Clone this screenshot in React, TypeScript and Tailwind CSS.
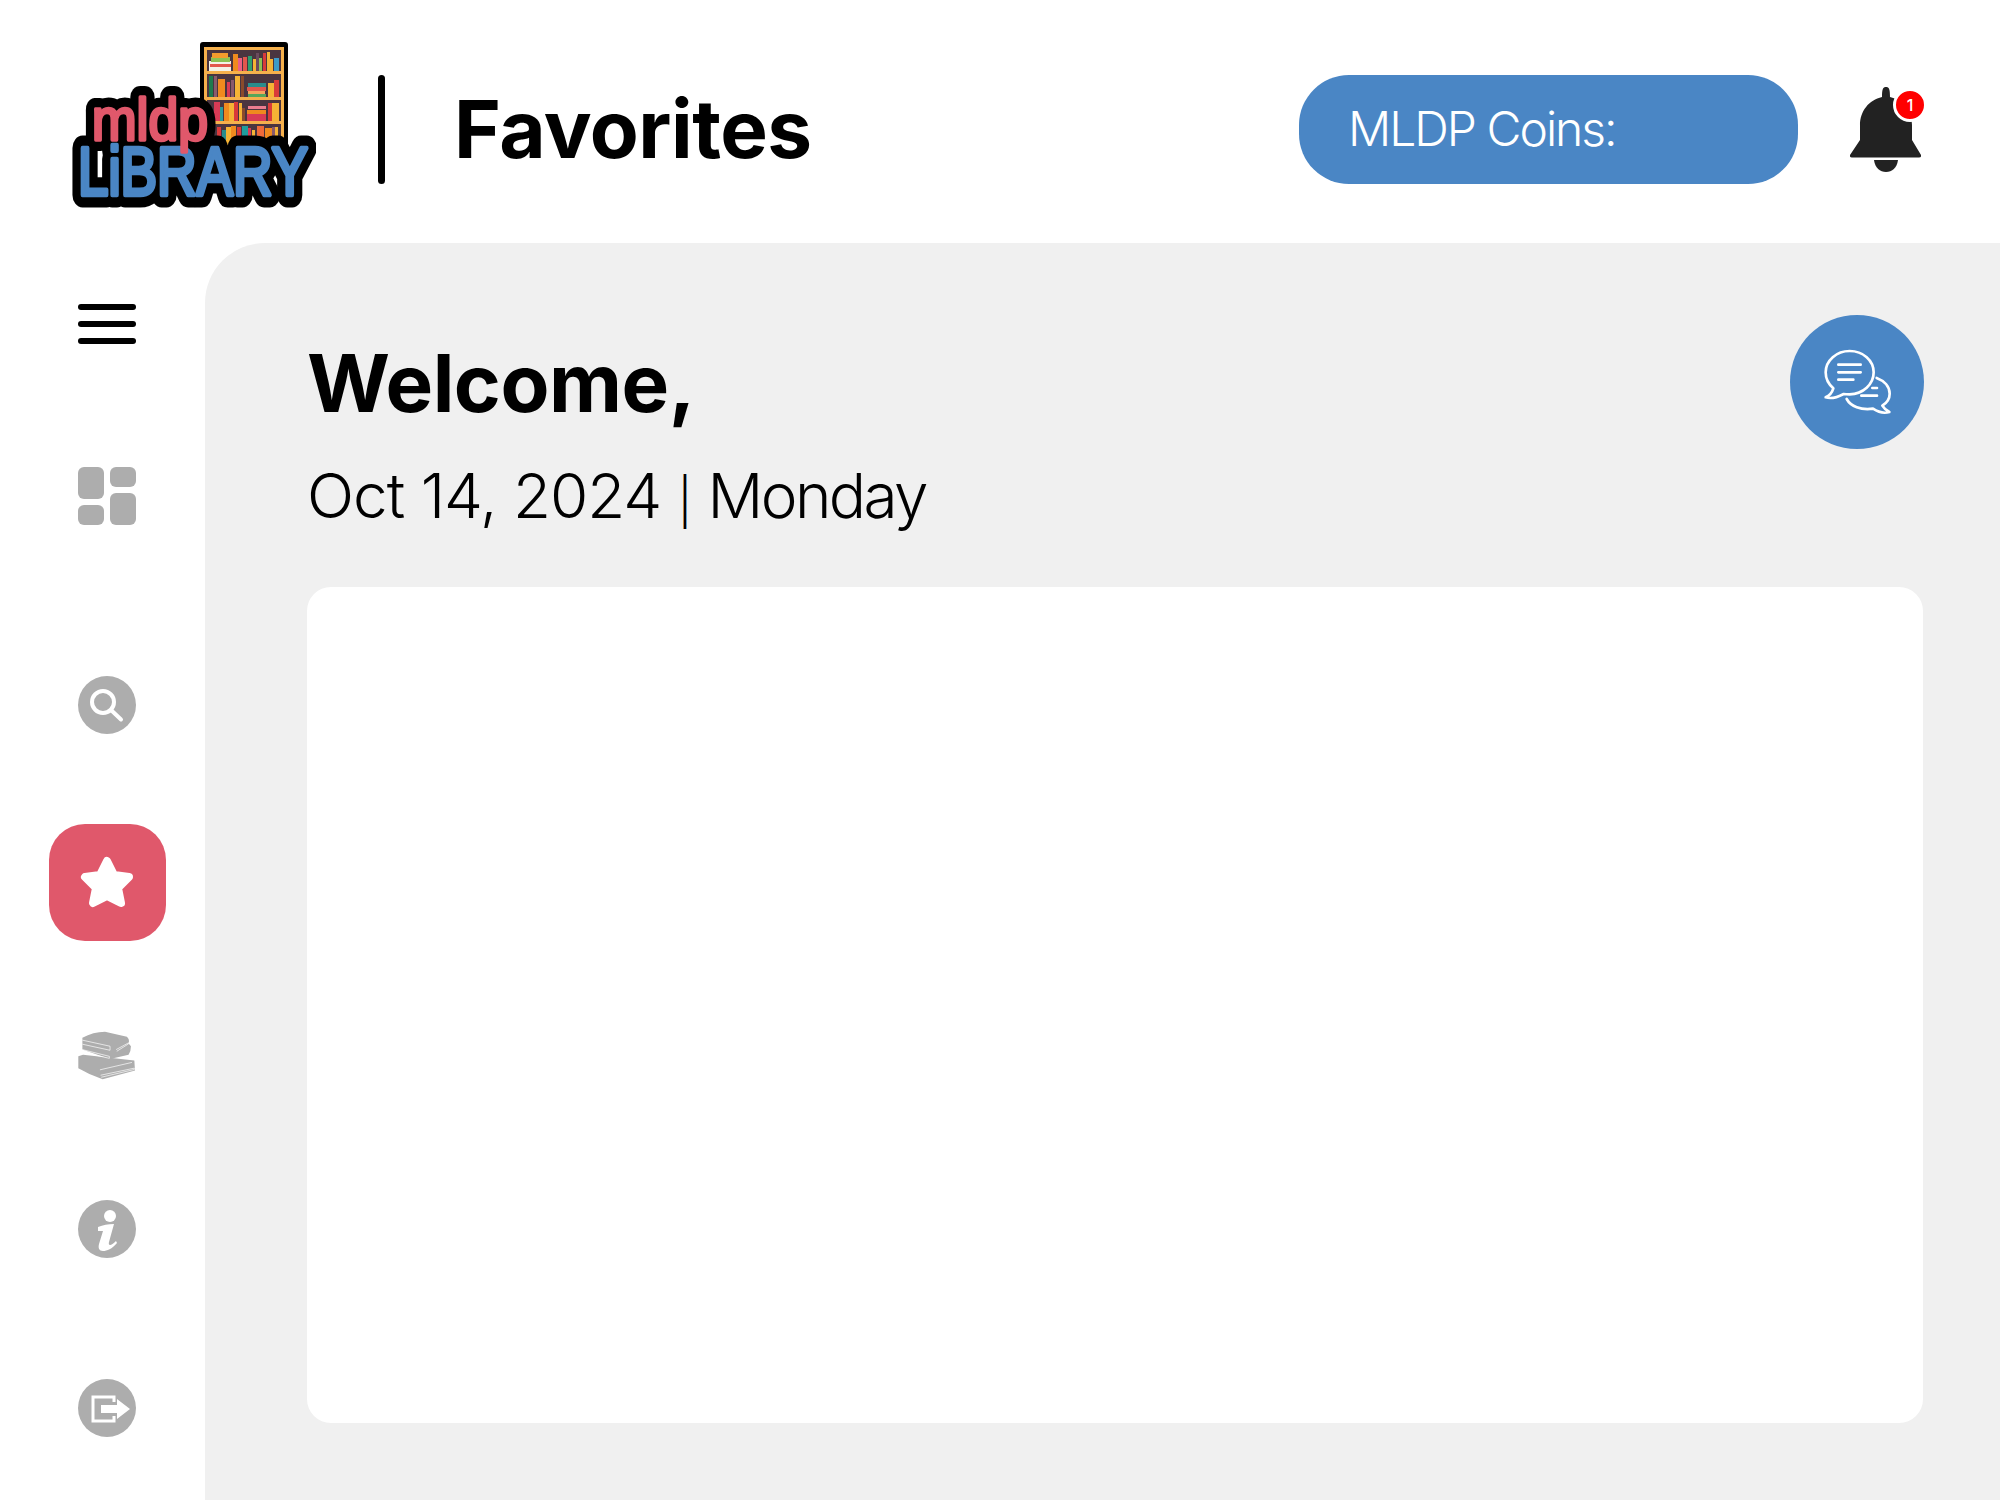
const shelfBooks: [number, number, number, number, string][] = [
  // top shelf
  [209, 61, 22, 10, '#f4f1e6'], [210, 64, 21, 3, '#e2574c'], [211, 57, 19, 5, '#8cc152'], [212, 53, 16, 5, '#f39c2d'],
  [233, 54, 5, 17, '#ef8a1e'], [238, 58, 4, 13, '#ec5f83'], [243, 57, 4, 14, '#e2574c'], [248, 56, 4, 15, '#2f9e6e'],
  [253, 59, 3, 12, '#f5b335'], [256, 53, 3, 18, '#6b4a5c'], [259, 58, 3, 13, '#8cc152'], [263, 53, 3, 18, '#d93a3a'],
  [267, 52, 3, 19, '#f5b335'], [270, 59, 3, 12, '#f5b335'], [274, 58, 5, 13, '#3d9bc9'],
  // second shelf
  [209, 76, 4, 21, '#1f7a4d'], [214, 76, 3, 21, '#8a5a6c'], [218, 79, 7, 18, '#ef8a1e'], [227, 82, 3, 15, '#d93a55'],
  [231, 80, 3, 17, '#8a5a6c'], [235, 76, 5, 21, '#f5b335'], [241, 76, 3, 21, '#8b4a2b'], [248, 83, 18, 4, '#2a8c8c'],
  [247, 87, 19, 4, '#e2574c'], [248, 91, 17, 3, '#f5a35c'], [248, 94, 18, 3, '#55a65a'], [268, 83, 7, 14, '#f5b335'],
  [274, 80, 5, 17, '#d93a3a'],
  // third shelf
  [214, 102, 6, 19, '#d93a55'], [220, 107, 3, 14, '#2a9c9c'], [224, 103, 5, 18, '#ef8a1e'], [229, 103, 5, 18, '#f5b335'],
  [234, 102, 4, 19, '#d93a3a'], [239, 103, 3, 18, '#f5b335'], [242, 108, 3, 13, '#8b4a2b'], [248, 106, 18, 3, '#ec7d8f'],
  [247, 110, 19, 4, '#ef8a1e'], [247, 114, 19, 7, '#d93a55'], [268, 103, 4, 18, '#d93a3a'], [272, 103, 7, 18, '#f5b335'],
  // bottom shelf
  [217, 127, 4, 18, '#d93a3a'], [222, 130, 4, 15, '#2a8c8c'], [226, 127, 5, 18, '#f5b335'], [231, 126, 5, 19, '#ef8a1e'],
  [237, 127, 4, 18, '#d93a3a'], [242, 126, 6, 19, '#1f9c9c'], [248, 128, 3, 17, '#d93a55'], [252, 130, 3, 15, '#f5b335'],
  [257, 126, 7, 19, '#ef6a3a'], [265, 128, 7, 17, '#ef8a1e'], [272, 127, 3, 18, '#8a5a6c'], [275, 127, 3, 18, '#f5b335'],
];

function Logo() {
  return (
    <svg viewBox="70 40 246 172" className="w-[246px] h-[172px] shrink-0 -mt-[7px]">
      <defs>
        <text id="logo-top" x="92" y="140" textLength="116" lengthAdjust="spacingAndGlyphs" fontSize="60" className="font-['Liberation_Sans',sans-serif]">
          mldp
        </text>
        <text id="logo-bottom" x="78" y="195" textLength="230" lengthAdjust="spacingAndGlyphs" fontSize="68" className="font-['Liberation_Sans',sans-serif]">
          LiBRARY
        </text>
      </defs>
      {/* bookcase */}
      <rect x="200" y="42" width="88" height="110" rx="3" fill="#000" />
      <rect x="204" y="47" width="80" height="105" fill="#f5b04c" />
      <rect x="207" y="50" width="74" height="102" fill="#4a3540" />
      <rect x="207" y="71" width="74" height="3" fill="#f5b04c" />
      <rect x="207" y="97" width="74" height="3" fill="#f5b04c" />
      <rect x="207" y="121" width="74" height="3" fill="#f5b04c" />
      {shelfBooks.map(([x, y, w, h, c], i) => (
        <rect key={i} x={x} y={y} width={w} height={h} fill={c} />
      ))}
      {/* wordmark */}
      <use href="#logo-top" fill="#000" stroke="#000" strokeWidth="22" strokeLinejoin="round" />
      <use href="#logo-bottom" fill="#000" stroke="#000" strokeWidth="25" strokeLinejoin="round" />
      <use href="#logo-bottom" fill="#4a86c5" stroke="#4a86c5" strokeWidth="4.500" strokeLinejoin="round" strokeLinecap="round" />
      <use href="#logo-top" fill="#e0586b" stroke="#e0586b" strokeWidth="3.500" strokeLinejoin="round" strokeLinecap="round" />
    </svg>
  );
}

function Bell() {
  return (
    <div className="relative w-[71px] h-[85px]">
      <svg viewBox="0 0 71 85" className="w-[71px] h-[85px]" fill="#222">
        <path d="M32 10 C32 2 33 0 36 0 C39 0 40 2 40 10 C53 13 62 24 62 38 L62 53 L71 68 Q71.500 70.500 69 70.500 L2 70.500 Q-.5 70.500 0 68 L10 53 L10 38 C10 24 19 13 32 10 Z" />
        <path d="M24 73 H48 C47 81 42 85 36 85 C30 85 25 81 24 73 Z" />
      </svg>
      <span className="absolute right-[-6px] top-[1px] w-[34px] h-[34px] rounded-full bg-[#f00] border-[3px] border-white flex items-center justify-center text-white text-[16px] leading-none font-medium">
        1
      </span>
    </div>
  );
}

function GridIcon() {
  return (
    <svg viewBox="0 0 58 58" className="w-[58px] h-[58px]" fill="#adadad">
      <rect x="0" y="0" width="26" height="32" rx="6" />
      <rect x="32" y="0" width="26" height="20" rx="6" />
      <rect x="0" y="38" width="26" height="20" rx="6" />
      <rect x="32" y="26" width="26" height="32" rx="6" />
    </svg>
  );
}

function SearchIcon() {
  return (
    <svg viewBox="0 0 58 58" className="w-[58px] h-[58px]">
      <circle cx="29" cy="29" r="29" fill="#adadad" />
      <circle cx="25" cy="26" r="11" fill="none" stroke="#fff" strokeWidth="4" />
      <path d="M33 34 L43 43.500" stroke="#fff" strokeWidth="4" strokeLinecap="round" />
    </svg>
  );
}

function StarIcon() {
  return (
    <svg viewBox="0 0 58 58" className="w-[58px] h-[58px]">
      <path
        d="M29 7 L36 21 L51 23 L40 34 L43 49 L29 42 L15 49 L18 34 L7 23 L22 21 Z"
        fill="#fff"
        stroke="#fff"
        strokeWidth="8"
        strokeLinejoin="round"
      />
    </svg>
  );
}

function BooksIcon() {
  return (
    <svg viewBox="55 95 172 145" className="w-[58px] h-[49px]" fill="#adadad">
      <path d="M56 170 L70 165 L222 182 L224 212 L128 238 Q90 225 56 205 Z" />
      <path d="M68 115 Q100 97 135 97 L200 112 Q209 120 205 132 L212 140 Q212 155 205 165 L150 178 L68 150 Z" />
      <path d="M68 122 L150 140 L150 152 L68 134 M68 150 L148 170 L148 176 L62 156 M122 226 L222 205 L222 209 L124 232 M168 150 L205 130 L205 133 L170 155 M120 210 L215 188" stroke="#fff" strokeWidth="2" fill="none" />
    </svg>
  );
}

function InfoIcon() {
  return (
    <svg viewBox="0 0 58 58" className="w-[58px] h-[58px]">
      <circle cx="29" cy="29" r="29" fill="#adadad" />
      <circle cx="32" cy="16" r="6" fill="#fff" />
      <path d="M20 27 C25 25 30 24 36 24 L31 42 C30 46 33 46 38 41 L39 43 C34 49 29 51 25 51 C21 51 20 48 21 44 L25 31 L20 31 Z" fill="#fff" />
    </svg>
  );
}

function LogoutIcon() {
  return (
    <svg viewBox="0 0 58 58" className="w-[58px] h-[58px]">
      <circle cx="29" cy="29" r="29" fill="#adadad" />
      <path d="M36 23 V18 H15 V42 H36 V37" fill="none" stroke="#fff" strokeWidth="3" />
      <path d="M23 26 H39 V20 L52 30 L39 40 V34 H23 Z" fill="#fff" />
    </svg>
  );
}

function ChatIcon() {
  return (
    <svg viewBox="58 47 402 400" className="w-[134px] h-[134px]" fill="none" stroke="#fff" strokeWidth="8" strokeLinecap="round" strokeLinejoin="round">
      <circle cx="259" cy="247" r="201" fill="#4a86c5" stroke="none" />
      <path d="M237 154 C198 154 165 182 165 218 C165 238 175 255 188 266 C184 280 176 288 165 293 C180 298 200 293 219 283 C225 284 231 284 237 284 C277 284 309 254 309 218 C309 182 277 154 237 154 Z" />
      <path d="M318 235 C342 244 357 262 357 282 C357 296 349 309 335 318 C340 327 347 332 356 337 C340 342 322 337 307 327 C270 332 240 320 228 298" />
      <path d="M203 195 H270 M203 218 H270 M203 240 H248 M305 265 H319 M272 288 H319" />
    </svg>
  );
}

export default function App() {
  return (
    <div className="w-full h-[1500px] overflow-hidden bg-white flex flex-col font-['Inter',sans-serif] text-black">
      <header className="h-[243px] shrink-0 flex items-center pt-[16px] pl-[70px] pr-[79px]">
        <Logo />
        <div className="w-[7px] shrink-0 h-[109px] rounded-full bg-black ml-[62px] mr-[69px]" />
        <h1 className="text-[80px] leading-none font-bold tracking-[-0.5px] pb-[2px]">Favorites</h1>
        <div className="ml-auto w-[499px] h-[109px] rounded-[50px] bg-[#4a86c5] flex items-center pl-[49px] pb-[2px] text-white text-[48px] font-light tracking-[-2px]">
          MLDP Coins:
        </div>
        <div className="ml-[52px]">
          <Bell />
        </div>
      </header>

      <div className="flex-1 flex min-h-0">
        <nav className="w-[205px] shrink-0 pl-[9px] flex flex-col items-center">
          <div className="mt-[61px] w-[58px] h-[40px] flex flex-col justify-between">
            <div className="h-[6px] rounded-full bg-black" />
            <div className="h-[6px] rounded-full bg-black" />
            <div className="h-[6px] rounded-full bg-black" />
          </div>
          <div className="mt-[123px]"><GridIcon /></div>
          <div className="mt-[151px]"><SearchIcon /></div>
          <div className="mt-[90px] w-[117px] h-[117px] rounded-[36px] bg-[#e0586b] flex items-center justify-center">
            <StarIcon />
          </div>
          <div className="mt-[90px]"><BooksIcon /></div>
          <div className="mt-[120px]"><InfoIcon /></div>
          <div className="mt-[121px]"><LogoutIcon /></div>
        </nav>

        <main className="flex-1 min-w-0 bg-[#f0f0f0] rounded-tl-[60px] pl-[102px] pr-[77px] flex flex-col">
          <div className="h-[344px] shrink-0 flex justify-between">
            <div className="pt-[96px]">
              <h2 className="text-[80px] leading-[88px] font-bold tracking-[-0.5px]">Welcome,</h2>
              <p className="mt-[33px] text-[62px] leading-[72px] font-light tracking-[-1px]">
                Oct 14, 2024 <span className="text-[46px]">|</span> <span className="tracking-[-2.6px]">Monday</span>
              </p>
            </div>
            <div className="mt-[72px] -mr-px">
              <ChatIcon />
            </div>
          </div>
          <div className="h-[836px] rounded-[24px] bg-white" />
        </main>
      </div>
    </div>
  );
}
